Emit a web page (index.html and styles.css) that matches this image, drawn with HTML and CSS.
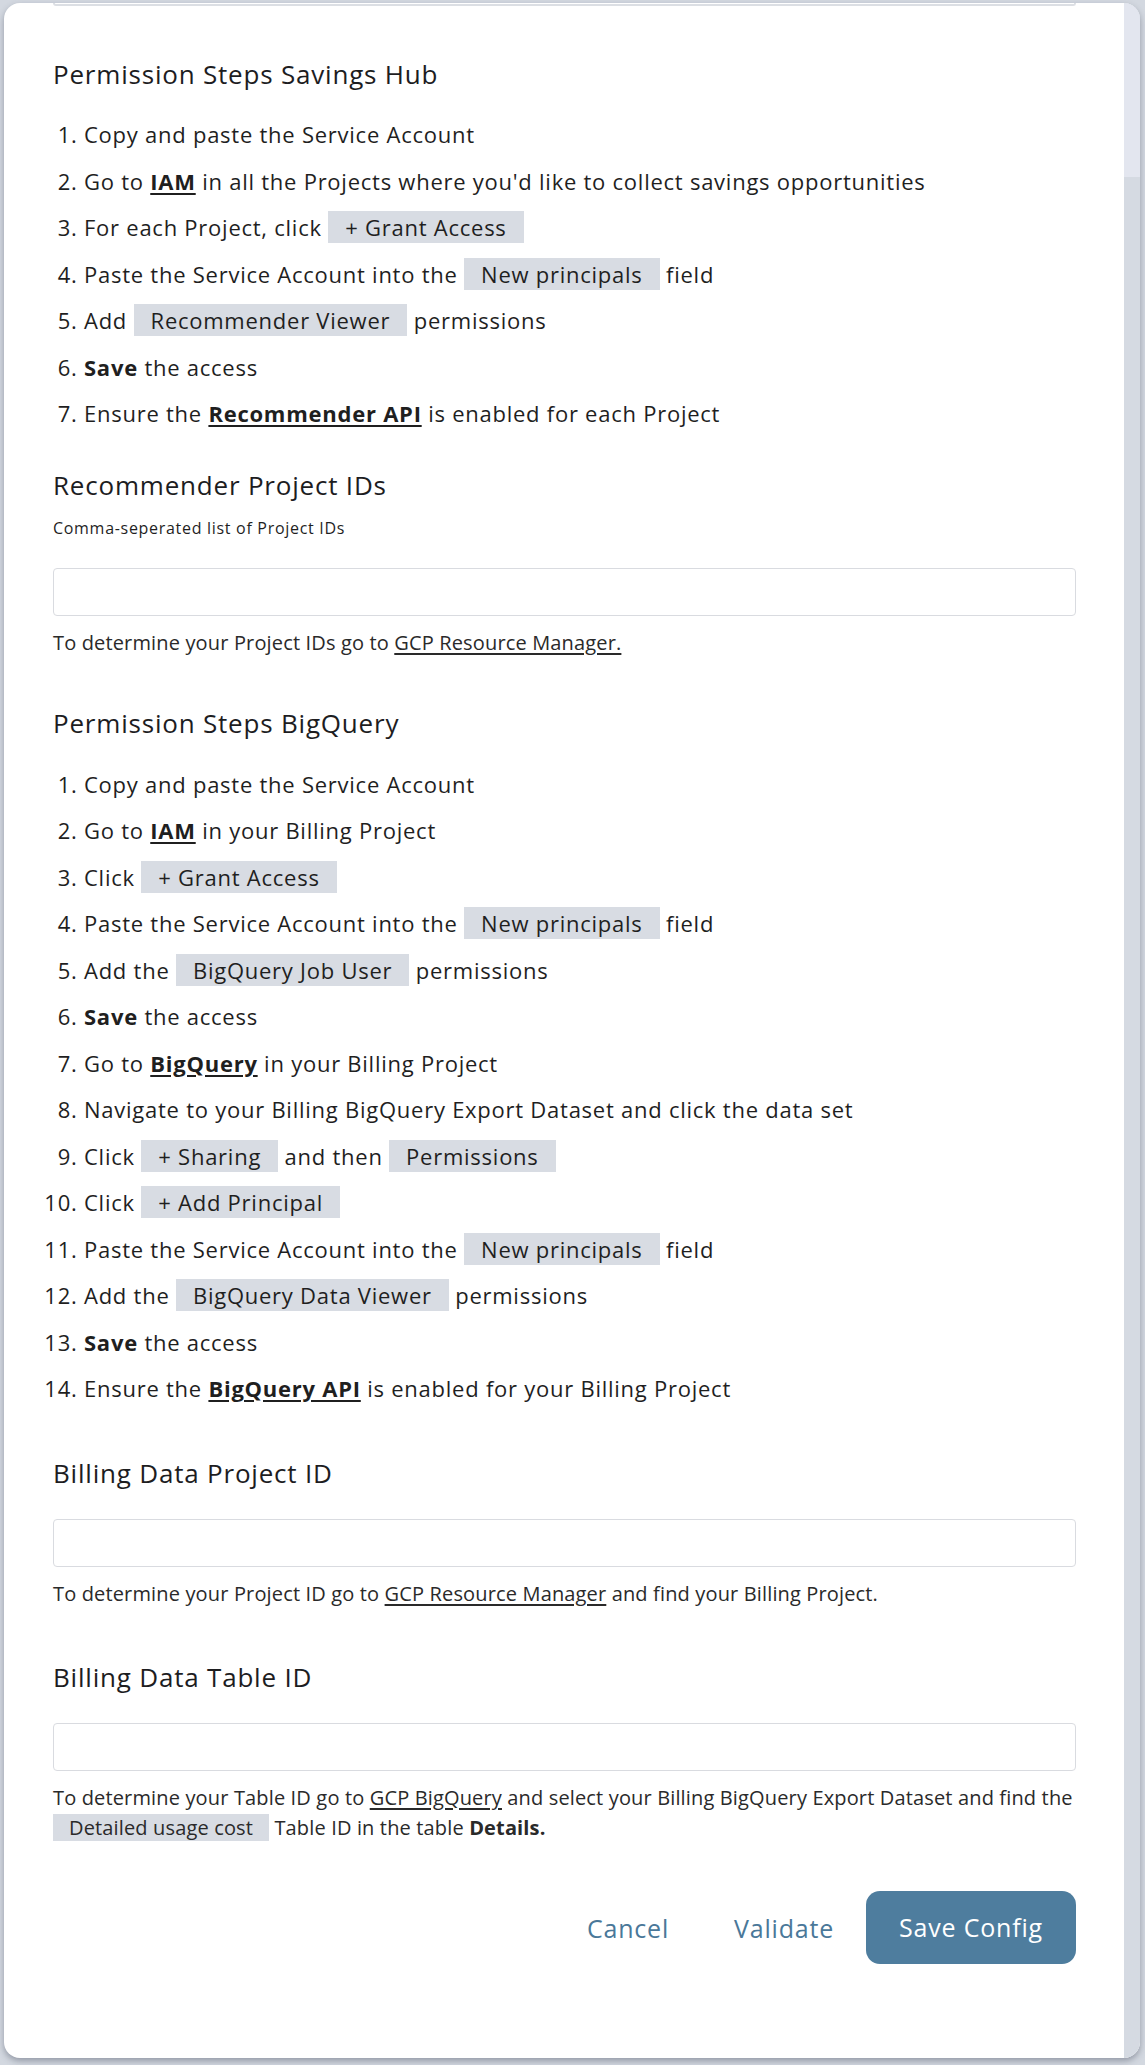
FILE: index.html
```html
<!DOCTYPE html>
<html lang="en">
<head>
<meta charset="utf-8">
<title>GCP Config</title>
<link rel="stylesheet" href="styles.css">
</head>
<body>
<div class="modal">
  <div class="content">
    <div class="prev-box"></div>

    <h2 class="title title-first">Permission Steps Savings Hub</h2>
    <ol class="steps steps-first">
      <li>Copy and paste the Service Account</li>
      <li>Go to <a class="strong-link">IAM</a> in all the Projects where you'd like to collect savings opportunities</li>
      <li>For each Project, click <span class="chip">+ Grant Access</span></li>
      <li>Paste the Service Account into the <span class="chip">New principals</span> field</li>
      <li>Add <span class="chip">Recommender Viewer</span> permissions</li>
      <li><b>Save</b> the access</li>
      <li>Ensure the <a class="strong-link">Recommender API</a> is enabled for each Project</li>
    </ol>

    <h2 class="title title-rec">Recommender Project IDs</h2>
    <div class="label">Comma-seperated list of Project IDs</div>
    <input class="field field-rec" type="text">
    <p class="help">To determine your Project IDs go to <a class="link">GCP Resource Manager.</a></p>

    <h2 class="title title-bq">Permission Steps BigQuery</h2>
    <ol class="steps steps-bq">
      <li>Copy and paste the Service Account</li>
      <li>Go to <a class="strong-link">IAM</a> in your Billing Project</li>
      <li>Click <span class="chip">+ Grant Access</span></li>
      <li>Paste the Service Account into the <span class="chip">New principals</span> field</li>
      <li>Add the <span class="chip">BigQuery Job User</span> permissions</li>
      <li><b>Save</b> the access</li>
      <li>Go to <a class="strong-link">BigQuery</a> in your Billing Project</li>
      <li>Navigate to your Billing BigQuery Export Dataset and click the data set</li>
      <li>Click <span class="chip">+ Sharing</span> and then <span class="chip">Permissions</span></li>
      <li>Click <span class="chip">+ Add Principal</span></li>
      <li>Paste the Service Account into the <span class="chip">New principals</span> field</li>
      <li>Add the <span class="chip">BigQuery Data Viewer</span> permissions</li>
      <li><b>Save</b> the access</li>
      <li>Ensure the <a class="strong-link">BigQuery API</a> is enabled for your Billing Project</li>
    </ol>

    <h2 class="title title-proj">Billing Data Project ID</h2>
    <input class="field field-after-title" type="text">
    <p class="help">To determine your Project ID go to <a class="link">GCP Resource Manager</a> and find your Billing Project.</p>

    <h2 class="title title-table">Billing Data Table ID</h2>
    <input class="field field-after-title" type="text">
    <p class="help">To determine your Table ID go to <a class="link">GCP BigQuery</a> and select your Billing BigQuery Export Dataset and find the <span class="chip chip-small">Detailed usage cost</span> Table ID in the table <b>Details.</b></p>

    <div class="actions">
      <button class="btn-text btn-cancel" type="button">Cancel</button>
      <button class="btn-text" type="button">Validate</button>
      <button class="btn-primary" type="button">Save Config</button>
    </div>
  </div>
  <div class="scrollbar"><div class="thumb"></div></div>
</div>
</body>
</html>
```

FILE: styles.css
```css
* { box-sizing: border-box; }

html, body { height: 100%; }

body {
  margin: 0;
  background: #d3d8e0;
  font-family: "Open Sans", "Liberation Sans", sans-serif;
  color: #1f1f1f;
}

.modal {
  margin: 3px 5px 0 4px;
  height: 2055px;
  display: flex;
  background: #ffffff;
  border-radius: 16px;
  overflow: hidden;
  box-shadow: 0 3px 6px rgba(70, 78, 95, 0.45);
}

.content {
  flex: 1;
  padding: 0 48px 94px 49px;
}

.scrollbar {
  width: 16px;
  background: #d5dae2;
}

.thumb {
  height: 174px;
  background: #e3e6ef;
}

.prev-box {
  height: 3px;
  border: 2px solid #dcdfe4;
  border-top: 0;
  border-radius: 0 0 4px 4px;
}

.title {
  margin: 0;
  font-size: 26px;
  font-weight: 500;
  line-height: 36px;
  letter-spacing: 0.8px;
  color: #1d1d1f;
}

.title-first { margin-top: 50px; }
.title-rec { margin-top: 30px; }
.title-bq { margin-top: 47px; }
.title-proj { margin-top: 43px; }
.title-table { margin-top: 50px; }

.steps {
  margin: 0;
  padding-left: 31px;
  font-size: 22px;
  line-height: 46.5px;
  letter-spacing: 0.75px;
}

.steps-first { margin-top: 19px; }
.steps-bq { margin-top: 20px; }

.steps b { font-weight: 700; }

.strong-link {
  font-weight: 700;
  color: #1f1f1f;
  text-decoration: underline;
  text-decoration-thickness: 2px;
  text-underline-offset: 3px;
}

.chip {
  background: #d8dce3;
  padding: 1px 17px;
}

.chip-small {
  padding: 0 16px;
}

.label {
  margin-top: 15px;
  font-size: 16px;
  font-weight: 500;
  line-height: 20px;
  letter-spacing: 0.7px;
}

.field {
  display: block;
  width: 100%;
  height: 48px;
  border: 1px solid #d9dbe0;
  border-radius: 4px;
  background: #ffffff;
  font-family: inherit;
}

.field-rec { margin-top: 30px; }
.field-after-title { margin-top: 28px; }

.help {
  margin: 12px 0 0;
  font-size: 20px;
  line-height: 30px;
  letter-spacing: 0.15px;
  color: #2a2a2a;
}

.help b { font-weight: 700; }

.link {
  color: #2a2a2a;
  text-decoration: underline;
  text-underline-offset: 3px;
}

.actions {
  margin-top: 50px;
  display: flex;
  justify-content: flex-end;
  align-items: center;
  gap: 16px;
}

.btn-text {
  background: none;
  border: 0;
  padding: 0 16px;
  font-family: inherit;
  font-size: 25px;
  font-weight: 500;
  letter-spacing: 0.8px;
  color: #4a7899;
}

.btn-cancel { margin-right: 17px; }

.btn-primary {
  width: 210px;
  height: 73px;
  margin-top: -2px;
  border: 0;
  border-radius: 14px;
  background: #4e7d9e;
  color: #ffffff;
  font-family: inherit;
  font-size: 25px;
  font-weight: 500;
  letter-spacing: 0.8px;
}
```
